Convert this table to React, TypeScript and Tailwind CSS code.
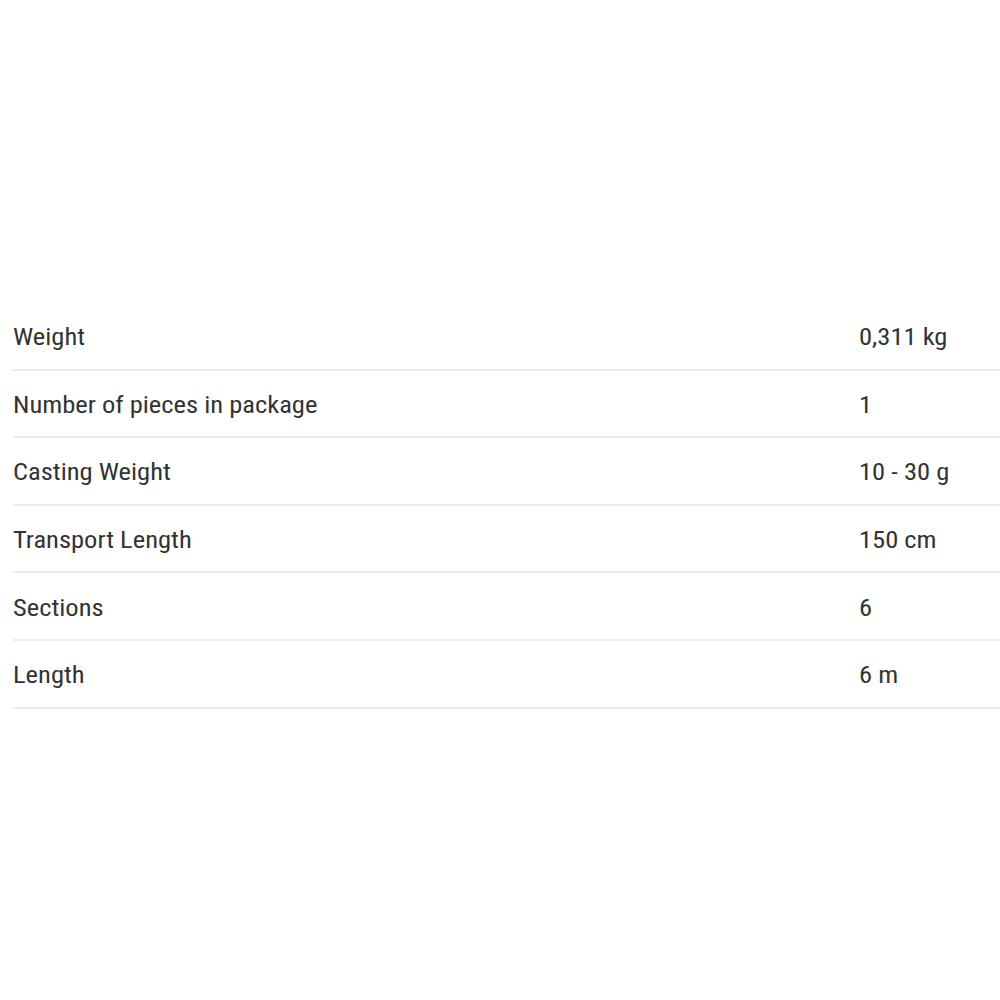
const ROWS = [
  ['Weight', '0,311 kg'],
  ['Number of pieces in package', '1'],
  ['Casting Weight', '10 - 30 g'],
  ['Transport Length', '150 cm'],
  ['Sections', '6'],
  ['Length', '6 m'],
];

export default function App() {
  return (
    <div className="w-[1000px] h-[1000px] bg-white pt-[302px] pl-[13px]" style={{ fontFamily: 'Roboto, sans-serif' }}>
      <table className="w-full border-collapse text-[#333] text-[24px] [font-stretch:condensed]">
        <tbody>
          {ROWS.map(([label, value]) => (
            <tr key={label} className="h-[67.6px] border-b-2 border-[#ececec]">
              <td className="p-0 pt-[3px] align-middle">
                <span className="inline-block origin-left scale-x-[1.105]">{label}</span>
              </td>
              <td className="p-0 pt-[3px] w-[141px] align-middle">
                <span className="inline-block origin-left scale-x-[1.105]">{value}</span>
              </td>
            </tr>
          ))}
        </tbody>
      </table>
    </div>
  );
}
